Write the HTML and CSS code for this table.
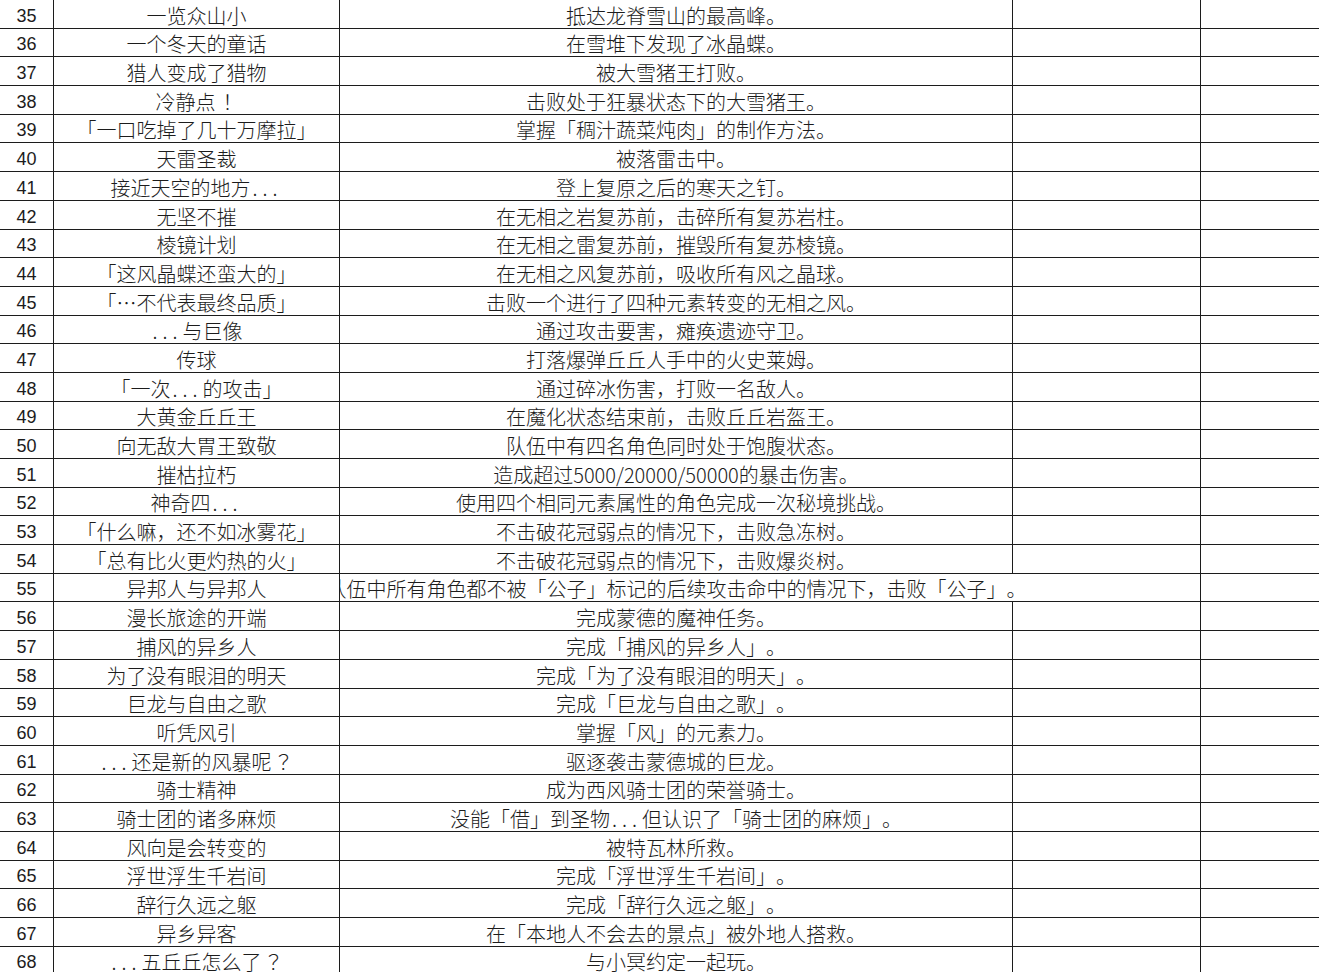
FILE: index.html
```html
<!DOCTYPE html>
<html lang="zh-CN">
<head>
<meta charset="utf-8">
<title>成就表</title>
<link rel="stylesheet" href="styles.css">
</head>
<body>
<div class="sheet">
<div class="row"><div class="c num">35</div><div class="c name">一览众山小</div><div class="c desc">抵达龙脊雪山的最高峰。</div><div class="c e"></div><div class="c e last"></div></div>
<div class="row"><div class="c num">36</div><div class="c name">一个冬天的童话</div><div class="c desc">在雪堆下发现了冰晶蝶。</div><div class="c e"></div><div class="c e last"></div></div>
<div class="row"><div class="c num">37</div><div class="c name">猎人变成了猎物</div><div class="c desc">被大雪猪王打败。</div><div class="c e"></div><div class="c e last"></div></div>
<div class="row"><div class="c num">38</div><div class="c name">冷静点<span class="fw">！</span></div><div class="c desc">击败处于狂暴状态下的大雪猪王。</div><div class="c e"></div><div class="c e last"></div></div>
<div class="row"><div class="c num">39</div><div class="c name">「一口吃掉了几十万摩拉」</div><div class="c desc">掌握「稠汁蔬菜炖肉」的制作方法。</div><div class="c e"></div><div class="c e last"></div></div>
<div class="row"><div class="c num">40</div><div class="c name">天雷圣裁</div><div class="c desc">被落雷击中。</div><div class="c e"></div><div class="c e last"></div></div>
<div class="row"><div class="c num">41</div><div class="c name">接近天空的地方<span class="ell">...</span></div><div class="c desc">登上复原之后的寒天之钉。</div><div class="c e"></div><div class="c e last"></div></div>
<div class="row"><div class="c num">42</div><div class="c name">无坚不摧</div><div class="c desc">在无相之岩复苏前，击碎所有复苏岩柱。</div><div class="c e"></div><div class="c e last"></div></div>
<div class="row"><div class="c num">43</div><div class="c name">棱镜计划</div><div class="c desc">在无相之雷复苏前，摧毁所有复苏棱镜。</div><div class="c e"></div><div class="c e last"></div></div>
<div class="row"><div class="c num">44</div><div class="c name">「这风晶蝶还蛮大的」</div><div class="c desc">在无相之风复苏前，吸收所有风之晶球。</div><div class="c e"></div><div class="c e last"></div></div>
<div class="row"><div class="c num">45</div><div class="c name">「…不代表最终品质」</div><div class="c desc">击败一个进行了四种元素转变的无相之风。</div><div class="c e"></div><div class="c e last"></div></div>
<div class="row"><div class="c num">46</div><div class="c name"><span class="ell">...</span>与巨像</div><div class="c desc">通过攻击要害，瘫痪遗迹守卫。</div><div class="c e"></div><div class="c e last"></div></div>
<div class="row"><div class="c num">47</div><div class="c name">传球</div><div class="c desc">打落爆弹丘丘人手中的火史莱姆。</div><div class="c e"></div><div class="c e last"></div></div>
<div class="row"><div class="c num">48</div><div class="c name">「一次<span class="ell">...</span>的攻击」</div><div class="c desc">通过碎冰伤害，打败一名敌人。</div><div class="c e"></div><div class="c e last"></div></div>
<div class="row"><div class="c num">49</div><div class="c name">大黄金丘丘王</div><div class="c desc">在魔化状态结束前，击败丘丘岩盔王。</div><div class="c e"></div><div class="c e last"></div></div>
<div class="row"><div class="c num">50</div><div class="c name">向无敌大胃王致敬</div><div class="c desc">队伍中有四名角色同时处于饱腹状态。</div><div class="c e"></div><div class="c e last"></div></div>
<div class="row"><div class="c num">51</div><div class="c name">摧枯拉朽</div><div class="c desc">造成超过5000/20000/50000的暴击伤害。</div><div class="c e"></div><div class="c e last"></div></div>
<div class="row"><div class="c num">52</div><div class="c name">神奇四<span class="ell">...</span></div><div class="c desc">使用四个相同元素属性的角色完成一次秘境挑战。</div><div class="c e"></div><div class="c e last"></div></div>
<div class="row"><div class="c num">53</div><div class="c name">「什么嘛，还不如冰雾花」</div><div class="c desc">不击破花冠弱点的情况下，击败急冻树。</div><div class="c e"></div><div class="c e last"></div></div>
<div class="row"><div class="c num">54</div><div class="c name">「总有比火更灼热的火」</div><div class="c desc">不击破花冠弱点的情况下，击败爆炎树。</div><div class="c e"></div><div class="c e last"></div></div>
<div class="row"><div class="c num">55</div><div class="c name">异邦人与异邦人</div><div class="c desc spill">队伍中所有角色都不被「公子」标记的后续攻击命中的情况下，击败「公子」。</div><div class="c e"></div><div class="c e last"></div></div>
<div class="row"><div class="c num">56</div><div class="c name">漫长旅途的开端</div><div class="c desc">完成蒙德的魔神任务。</div><div class="c e"></div><div class="c e last"></div></div>
<div class="row"><div class="c num">57</div><div class="c name">捕风的异乡人</div><div class="c desc">完成「捕风的异乡人」。</div><div class="c e"></div><div class="c e last"></div></div>
<div class="row"><div class="c num">58</div><div class="c name">为了没有眼泪的明天</div><div class="c desc">完成「为了没有眼泪的明天」。</div><div class="c e"></div><div class="c e last"></div></div>
<div class="row"><div class="c num">59</div><div class="c name">巨龙与自由之歌</div><div class="c desc">完成「巨龙与自由之歌」。</div><div class="c e"></div><div class="c e last"></div></div>
<div class="row"><div class="c num">60</div><div class="c name">听凭风引</div><div class="c desc">掌握「风」的元素力。</div><div class="c e"></div><div class="c e last"></div></div>
<div class="row"><div class="c num">61</div><div class="c name"><span class="ell">...</span>还是新的风暴呢<span class="fw">？</span></div><div class="c desc">驱逐袭击蒙德城的巨龙。</div><div class="c e"></div><div class="c e last"></div></div>
<div class="row"><div class="c num">62</div><div class="c name">骑士精神</div><div class="c desc">成为西风骑士团的荣誉骑士。</div><div class="c e"></div><div class="c e last"></div></div>
<div class="row"><div class="c num">63</div><div class="c name">骑士团的诸多麻烦</div><div class="c desc">没能「借」到圣物<span class="ell">...</span>但认识了「骑士团的麻烦」。</div><div class="c e"></div><div class="c e last"></div></div>
<div class="row"><div class="c num">64</div><div class="c name">风向是会转变的</div><div class="c desc">被特瓦林所救。</div><div class="c e"></div><div class="c e last"></div></div>
<div class="row"><div class="c num">65</div><div class="c name">浮世浮生千岩间</div><div class="c desc">完成「浮世浮生千岩间」。</div><div class="c e"></div><div class="c e last"></div></div>
<div class="row"><div class="c num">66</div><div class="c name">辞行久远之躯</div><div class="c desc">完成「辞行久远之躯」。</div><div class="c e"></div><div class="c e last"></div></div>
<div class="row"><div class="c num">67</div><div class="c name">异乡异客</div><div class="c desc">在「本地人不会去的景点」被外地人搭救。</div><div class="c e"></div><div class="c e last"></div></div>
<div class="row"><div class="c num">68</div><div class="c name"><span class="ell">...</span>五丘丘怎么了<span class="fw">？</span></div><div class="c desc">与小冥约定一起玩。</div><div class="c e"></div><div class="c e last"></div></div>
</div>
</body>
</html>
```
FILE: styles.css
```css
html, body {
  margin: 0;
  padding: 0;
  background: #ffffff;
  overflow: hidden;
}

.sheet {
  font-family: "Noto Sans CJK SC", "Noto Sans", sans-serif;
  font-size: 20px;
  font-weight: 300;
  color: #1c1c1c;
  text-spacing-trim: space-all;
}

.row {
  display: grid;
  grid-template-columns: 54px 286px 673px 188px 1fr;
  height: 28.7px;
  box-sizing: border-box;
  border-bottom: 1px solid #1c1c1c;
}

.c {
  display: flex;
  align-items: flex-end;
  justify-content: center;
  box-sizing: border-box;
  border-right: 1px solid #1c1c1c;
  white-space: nowrap;
  line-height: 20px;
  padding-bottom: 2px;
  min-width: 0;
}

.num {
  font-family: "Liberation Sans", Arial, sans-serif;
  font-size: 18px;
  font-weight: 400;
}

.last {
  border-right: none;
}

.spill {
  border-right: none;
  clip-path: inset(-4px -400px -4px 0);
  position: relative;
  z-index: 1;
}

.ell {
  letter-spacing: 5px;
  padding-left: 2px;
}

.fw {
  font-family: "Noto Sans CJK TC", "Noto Sans CJK SC", sans-serif;
  padding-left: 2px;
}
```
